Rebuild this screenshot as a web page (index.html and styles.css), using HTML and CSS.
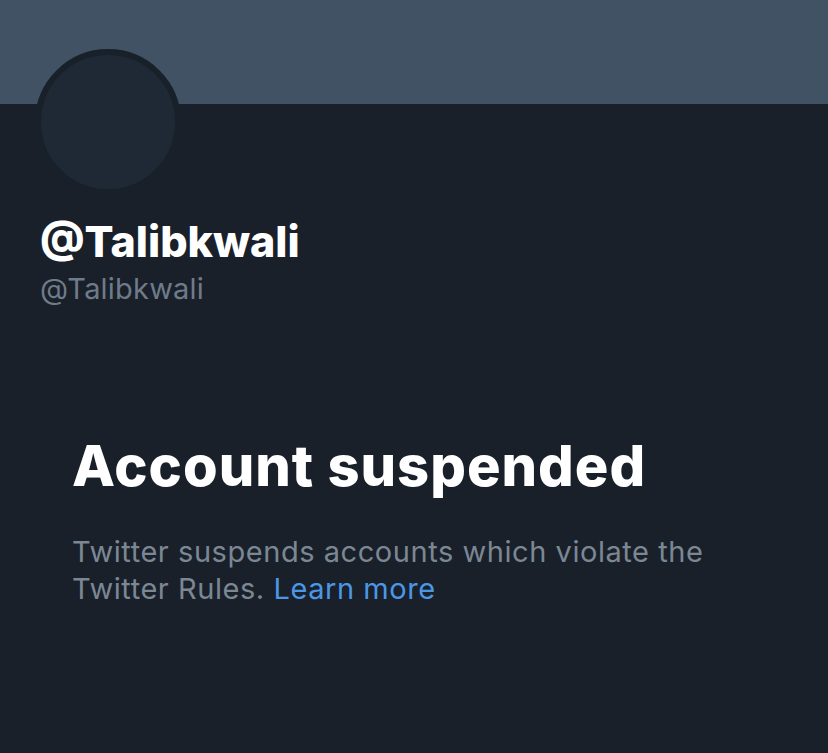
FILE: index.html
```html
<!DOCTYPE html>
<html lang="en">

<head>
  <meta charset="UTF-8">
  <meta name="viewport" content="width=device-width, initial-scale=1.0">
  <title>@Talibkwali</title>
  <link rel="stylesheet" href="styles.css">
</head>

<body>
  <div class="banner"></div>

  <div class="profile">
    <div class="avatar"></div>
    <h1 class="name">@Talibkwali</h1>
    <div class="handle">@Talibkwali</div>
  </div>

  <div class="notice">
    <h2>Account suspended</h2>
    <p>Twitter suspends accounts which violate the Twitter Rules. <a href="#">Learn more</a></p>
  </div>
</body>

</html>
```

FILE: styles.css
```css
body {
  font-family: Inter, "Noto Sans", sans-serif;
  background-color: #19202a;
  margin: 0;
  padding: 0;
  height: 753px;
  overflow: hidden;
}

.banner {
  height: 104px;
  background-color: #405264;
}

.profile {
  padding-left: 35px;
}

.avatar {
  width: 134px;
  height: 134px;
  margin-top: -55px;
  border: 6px solid #18202a;
  border-radius: 50%;
  background-color: #1f2835;
}

.name {
  margin: 20px 0 0 5px;
  color: #fff;
  font-size: 43px;
  font-weight: 800;
  line-height: 52px;
}

.handle {
  margin: 4px 0 0 5px;
  color: #6f7b89;
  font-size: 29px;
  line-height: 36px;
  letter-spacing: 0.2px;
}

.notice {
  padding: 126px 60px 0 72px;
}

.notice h2 {
  margin: 0;
  color: #fff;
  font-size: 56px;
  font-weight: 800;
  line-height: 66px;
  letter-spacing: 1px;
}

.notice p {
  margin: 34px 0 0;
  width: 650px;
  color: #7c8794;
  font-size: 29px;
  line-height: 37px;
  letter-spacing: 0.55px;
}

.notice a {
  color: #4b97e6;
  text-decoration: none;
}
```
